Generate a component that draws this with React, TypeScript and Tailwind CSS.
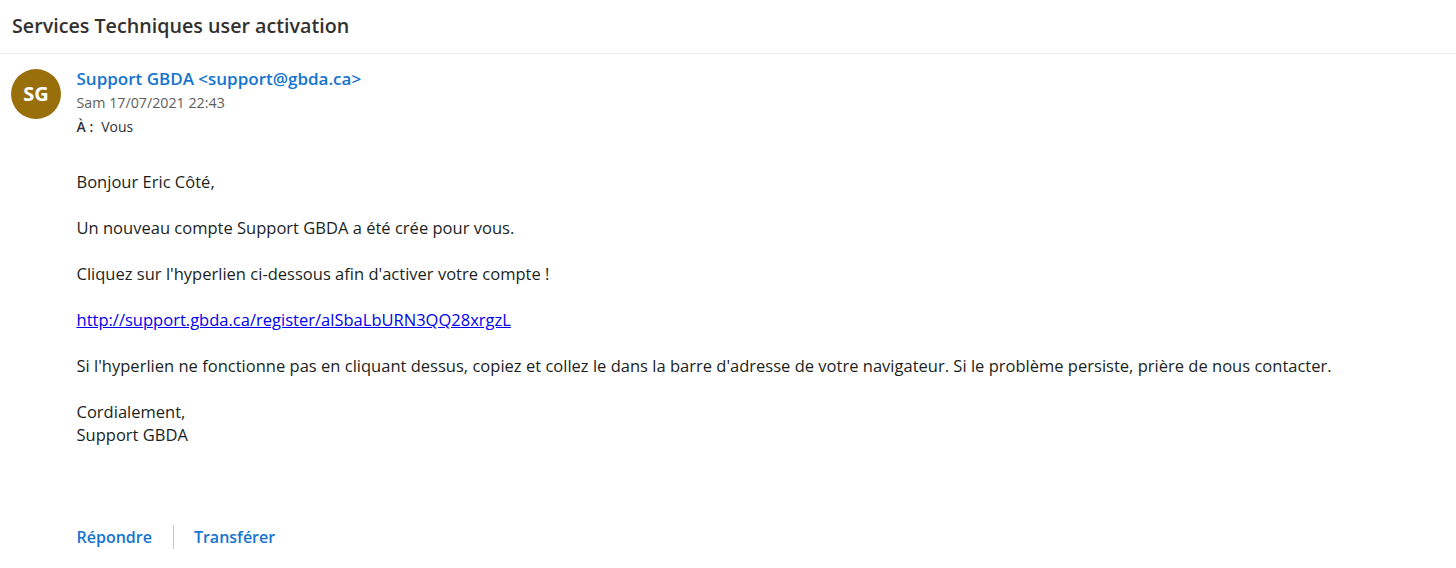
export default function App() {
  return (
    <div className="w-[1456px] h-[568px] overflow-hidden bg-white font-['Open_Sans',sans-serif] text-[#201f1e]">
      <div className="h-[54px] border-b border-[#edebe9] pl-3 pt-[12px]">
        <h1 className="text-[19.7px] leading-[28px] font-semibold text-[#323130]">Services Techniques user activation</h1>
      </div>
      <div className="flex pl-[11px] pt-[15px]">
        <div className="w-[50px] h-[50px] rounded-full bg-[#986f0b] text-white flex items-center justify-center text-[20px] font-bold">SG</div>
        <div className="ml-[15.5px]">
          <div className="text-[17px] leading-[20px] font-semibold text-[#1474d0]">Support GBDA &lt;support@gbda.ca&gt;</div>
          <div className="mt-[2px] text-[14.25px] leading-[24px] text-[#605e5c]">Sam 17/07/2021 22:43</div>
          <div className="text-[14px] leading-[24px] text-[#323130]"><span className="font-semibold">À :</span><span className="ml-2">Vous</span></div>
          <div className="mt-[31px] text-[16.5px] leading-[23px] tracking-[0.012px] text-[#201f1e]">
            <p>Bonjour Eric Côté,</p>
            <p className="mt-[23px]">Un nouveau compte Support GBDA a été crée pour vous.</p>
            <p className="mt-[23px]">Cliquez sur l'hyperlien ci-dessous afin d'activer votre compte !</p>
            <p className="mt-[23px]"><a href="#" className="underline text-[#0000ee]">http://support.gbda.ca/register/alSbaLbURN3QQ28xrgzL</a></p>
            <p className="mt-[23px]">Si l'hyperlien ne fonctionne pas en cliquant dessus, copiez et collez le dans la barre d'adresse de votre navigateur. Si le problème persiste, prière de nous contacter.</p>
            <p className="mt-[23px]">Cordialement,</p>
            <p>Support GBDA</p>
          </div>
          <div className="mt-[79px] flex items-center text-[16px] font-semibold text-[#1474d0]">
            <a href="#" className="leading-[24px]">Répondre</a>
            <div className="w-px h-[24px] bg-[#c8c6c4] ml-[21px] mr-[20px]"></div>
            <a href="#" className="leading-[24px]">Transférer</a>
          </div>
        </div>
      </div>
    </div>
  );
}
